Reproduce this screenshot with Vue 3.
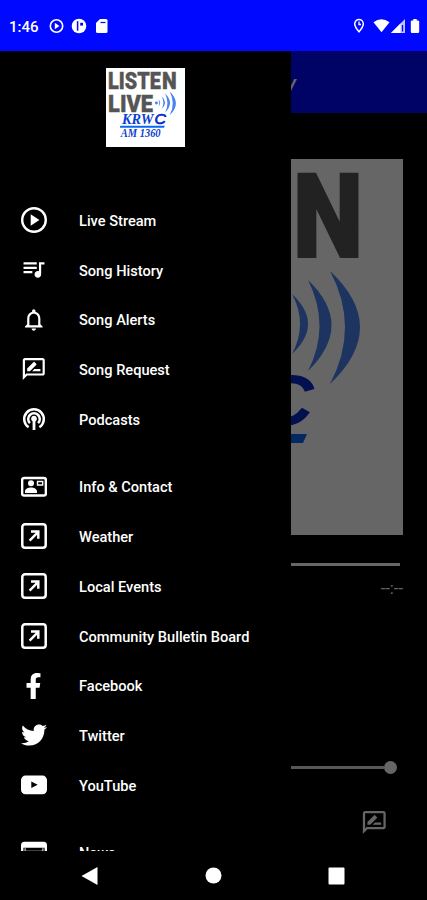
<script setup>
const icons = {
  play: {
    viewBox: '0 0 26 26',
    paths: ['M13 0a13 13 0 1 0 0 26 13 13 0 0 0 0-26zm0 2.4a10.6 10.6 0 1 1 0 21.2 10.6 10.6 0 0 1 0-21.2zM9.7 7.3v11.4l8.7-5.7z'],
  },
  queue: {
    viewBox: '.7 1.2 23.6 23.6',
    paths: ['M15 6H3v2h12V6zm0 4H3v2h12v-2zM3 16h8v-2H3v2zM17 6v8.18c-.31-.11-.65-.18-1-.18-1.66 0-3 1.34-3 3s1.34 3 3 3 3-1.34 3-3V8h3V6h-5z'],
  },
  bell: {
    viewBox: '.4 .4 23.6 23.6',
    paths: ['M12 22c1.1 0 2-.9 2-2h-4c0 1.1.9 2 2 2zm6-6v-5c0-3.07-1.63-5.64-4.5-6.32V4c0-.83-.67-1.5-1.5-1.5s-1.5.67-1.5 1.5v.68C7.64 5.36 6 7.92 6 11v5l-2 2v1h16v-1l-2-2zm-2 1H8v-6c0-2.48 1.51-4.5 4-4.5s4 2.02 4 4.5v6z'],
  },
  review: {
    viewBox: '.4 .2 23.6 23.6',
    paths: ['M20 2H4c-1.1 0-1.99.9-1.99 2L2 22l4-4h14c1.1 0 2-.9 2-2V4c0-1.1-.9-2-2-2zm0 14H5.17L4 17.17V4h16v12zM10.5 14H18v-2h-5.5zm3.86-5.87c.2-.2.2-.51 0-.71l-1.77-1.77c-.2-.2-.51-.2-.71 0L6 11.53V14h2.47l5.89-5.87z'],
  },
  podcast: {
    viewBox: '0 0 26 26',
    paths: ['M13 9.8a3 3 0 0 0-1.4 5.6V24h2.8v-8.6a3 3 0 0 0-1.4-5.6z'],
    strokes: ['M7.6 21.3a9.8 9.8 0 1 1 10.8 0', 'M8.9 17.2a5.8 5.8 0 1 1 8.2 0'],
  },
  contact: {
    viewBox: '0 0 26 26',
    paths: [
      'M10 6.2a3 3 0 1 0 0 6 3 3 0 0 0 0-6zM4 19v-1.5c0-2.6 3.2-4 6-4s6 1.4 6 4V19z',
      'M15.8 6.7h6.6v5h-6.6zm1.4 1.5v2h3.8v-2z',
    ],
    strokes: ['M3 4h20a1.9 1.9 0 0 1 1.9 1.9v13.6a1.9 1.9 0 0 1-1.9 1.9H3a1.9 1.9 0 0 1-1.9-1.9V5.9A1.9 1.9 0 0 1 3 4z'],
  },
  link: {
    viewBox: '0 0 26 26',
    paths: [],
    strokes: [
      'M4 1.3h18A2.7 2.7 0 0 1 24.7 4v18a2.7 2.7 0 0 1-2.7 2.7H4A2.7 2.7 0 0 1 1.3 22V4A2.7 2.7 0 0 1 4 1.3z',
      'M8.6 17.6l8.4-8.4M10 8.4h7.3v7.3',
    ],
  },
  facebook: {
    viewBox: '-86 0 512 512',
    paths: ['M279.14 288l14.22-92.66h-88.91v-60.13c0-25.35 12.42-50.06 52.24-50.06h40.42V6.26S260.43 0 225.36 0c-73.22 0-121.08 44.38-121.08 124.72v70.62H22.89V288h81.39v224h100.17V288z'],
  },
  twitter: {
    viewBox: '0 0 512 512',
    paths: ['M459.37 151.716c.325 4.548.325 9.097.325 13.645 0 138.72-105.583 298.558-298.558 298.558-59.452 0-114.68-17.219-161.137-47.106 8.447.974 16.568 1.299 25.34 1.299 49.055 0 94.213-16.568 130.274-44.832-46.132-.975-84.792-31.188-98.112-72.772 6.498.974 12.995 1.624 19.818 1.624 9.421 0 18.843-1.3 27.614-3.573-48.081-9.747-84.143-51.98-84.143-102.985v-1.299c13.969 7.797 30.214 12.67 47.431 13.319-28.264-18.843-46.781-51.005-46.781-87.391 0-19.492 5.197-37.36 14.294-52.954 51.655 63.675 129.3 105.258 216.365 109.807-1.624-7.797-2.599-15.918-2.599-24.04 0-57.828 46.782-104.934 104.934-104.934 30.213 0 57.502 12.67 76.67 33.137 23.715-4.548 46.456-13.32 66.599-25.34-7.798 24.366-24.366 44.833-46.132 57.827 21.117-2.273 41.584-8.122 60.426-16.243-14.292 20.791-32.161 39.308-52.628 54.253z'],
  },
  youtube: {
    viewBox: '0 0 26 26',
    paths: ['M4.5 3.6h17A4.5 4.5 0 0 1 26 8.1v9.6a4.5 4.5 0 0 1-4.5 4.5h-17A4.5 4.5 0 0 1 0 17.7V8.1a4.5 4.5 0 0 1 4.5-4.5zM10.3 9.5v6.5l6.4-3.2z'],
  },
  news: {
    viewBox: '0 0 26 26',
    paths: ['M3.5 1.7h19A3.5 3.5 0 0 1 26 5.2V22a2 2 0 0 1-2 2H2a2 2 0 0 1-2-2V5.2a3.5 3.5 0 0 1 3.5-3.5zM2.4 7.7V21h1.2V8.3h1v2.4h16.8V8.3h1V21h1.2V7.7z'],
  },
};

const menuGroups = [
  [
    { icon: 'play', label: 'Live Stream' },
    { icon: 'queue', label: 'Song History' },
    { icon: 'bell', label: 'Song Alerts' },
    { icon: 'review', label: 'Song Request' },
    { icon: 'podcast', label: 'Podcasts' },
  ],
  [
    { icon: 'contact', label: 'Info & Contact' },
    { icon: 'link', label: 'Weather' },
    { icon: 'link', label: 'Local Events' },
    { icon: 'link', label: 'Community Bulletin Board' },
    { icon: 'facebook', label: 'Facebook' },
    { icon: 'twitter', label: 'Twitter' },
    { icon: 'youtube', label: 'YouTube' },
  ],
  [
    { icon: 'news', label: 'News' },
  ],
];
</script>

<template>
  <div class="phone">
    <svg class="defs" width="0" height="0">
      <symbol id="station-logo" viewBox="0 0 376 376">
        <rect width="376" height="376" fill="#fff" />
        <g class="logo-heading">
          <text x="10" y="98" textLength="251" lengthAdjust="spacingAndGlyphs">LISTE</text>
          <text x="266" y="98" textLength="70" lengthAdjust="spacingAndGlyphs">N</text>
          <text x="10" y="209" textLength="214" lengthAdjust="spacingAndGlyphs">LIVE</text>
        </g>
        <g fill="#4a82f0">
          <circle cx="240" cy="167" r="7" />
          <path d="M249 149q18 17 0 36q9-18 0-36z" />
          <path d="M265 135q32 30 0 60q16-30 0-60z" />
          <path d="M281 121q47 45 0 91q23-45 0-91z" />
          <path d="M303 112q60 56 0 113q30-57 0-113z" />
        </g>
        <g class="logo-station">
          <text x="76" y="266" font-size="74" textLength="150" lengthAdjust="spacingAndGlyphs">KRW</text>
          <text class="logo-c" x="231" y="265" font-size="68" textLength="54" lengthAdjust="spacingAndGlyphs">C</text>
          <text x="70" y="329" font-size="57" textLength="190" lengthAdjust="spacingAndGlyphs">AM 1360</text>
        </g>
        <path d="M68 275h212l-4 9H66z" fill="#0a68f0" />
      </symbol>
    </svg>

    <header class="status-bar">
      <span class="clock">1:46</span>
      <svg class="status-left" width="60" height="16" viewBox="0 0 60 16">
        <circle cx="7.5" cy="8" r="6.2" fill="none" stroke="#fff" stroke-width="1.6" />
        <path d="M5.8 4.8v6.4l4.6-3.2z" fill="#fff" />
        <circle cx="30" cy="8" r="7.3" fill="#fff" />
        <path d="M28.6 3.2v9.5" stroke="#0008ff" stroke-width="1.5" />
        <path d="M31.2 4.8h2.8v2.8h-2.8z" fill="#0008ff" />
        <path d="M51 1h6a1.500 1.500 0 0 1 1.500 1.500v11a1.500 1.500 0 0 1-1.500 1.500h-8.500a1.500 1.500 0 0 1-1.500-1.500V5z" fill="#fff" />
        <path d="M51.5 4.5h5" stroke="#0008ff" stroke-width="1.2" />
      </svg>
      <svg class="status-right" width="68" height="16" viewBox="0 0 68 16">
        <path d="M6 1.5a4.3 4.3 0 0 0-4.3 4.3c0 3.2 4.3 8 4.3 8s4.3-4.8 4.3-8A4.3 4.3 0 0 0 6 1.5z" fill="none" stroke="#fff" stroke-width="1.5" />
        <path d="M6 3.5v3h2" fill="none" stroke="#fff" stroke-width="1.3" />
        <path d="M20.5 4.2q7.8-6 16 0l-8 10z" fill="#fff" />
        <path d="M52 1v14H38z" fill="#fff" opacity=".75" />
        <path d="M47.5 5.5V15H38z" fill="#fff" />
        <path d="M49.5 7v6.5" stroke="#0008ff" stroke-width="1.3" />
        <path d="M60.3 1h3.4v1.4h1.3a1.2 1.2 0 0 1 1.2 1.2v10.2a1.2 1.2 0 0 1-1.2 1.2h-6a1.2 1.2 0 0 1-1.2-1.2V3.6A1.2 1.2 0 0 1 59 2.4h1.3z" fill="#fff" />
      </svg>
    </header>

    <div class="stage">
      <main class="player">
        <div class="title-bar">y</div>
        <svg class="cover"><use href="#station-logo" /></svg>
        <div class="progress"></div>
        <div class="duration">--:--</div>
        <div class="volume">
          <span class="volume-track"></span>
          <span class="volume-thumb"></span>
        </div>
        <svg class="review" :viewBox="icons.review.viewBox">
          <path :d="icons.review.paths[0]" />
        </svg>
      </main>

      <div class="scrim"></div>

      <aside class="drawer">
        <svg class="drawer-logo"><use href="#station-logo" /></svg>
        <nav class="menu">
          <ul v-for="(group, index) in menuGroups" :key="index">
            <li v-for="item in group" :key="item.label">
              <svg class="menu-icon" :viewBox="icons[item.icon].viewBox">
                <path v-for="d in icons[item.icon].paths" :key="d" :d="d" fill-rule="evenodd" />
                <path v-for="d in icons[item.icon].strokes" :key="d" :d="d" class="stroked" />
              </svg>
              <span class="menu-label">{{ item.label }}</span>
            </li>
          </ul>
        </nav>
      </aside>
    </div>

    <footer class="nav-bar">
      <svg width="17" height="20" viewBox="0 0 17 20"><path d="M16.5 1v18L.5 10z" /></svg>
      <svg width="17" height="17" viewBox="0 0 17 17"><circle cx="8.5" cy="8.5" r="8" /></svg>
      <svg width="17" height="18" viewBox="0 0 17 18"><rect x=".5" y=".5" width="16" height="17" rx="1" /></svg>
    </footer>
  </div>
</template>

<style>
body {
  background: #000;
}
</style>

<style scoped>
.phone {
  width: 427px;
  height: 900px;
  display: flex;
  flex-direction: column;
  overflow: hidden;
  background: #000;
  color: #fff;
  font-family: Roboto, sans-serif;
}

.defs {
  position: absolute;
}

.logo-heading {
  font-family: Roboto, sans-serif;
  font-size: 116px;
  font-weight: 900;
  fill: #555;
  stroke: #555;
  stroke-width: 2;
}

.logo-station {
  font-family: "Liberation Serif", serif;
  font-weight: bold;
  font-style: italic;
  fill: #0c3fd0;
}

.logo-c {
  font-family: "Liberation Sans", sans-serif;
  font-weight: normal;
  stroke: #0628c8;
  stroke-width: 3;
  fill: #0628c8;
}

.status-bar {
  height: 51px;
  flex: none;
  display: flex;
  align-items: center;
  padding: 1px 6px 0 9px;
  box-sizing: border-box;
  background: #0008ff;
}

.clock {
  width: 40px;
  padding-top: 1px;
  font-size: 15px;
  font-weight: 500;
}

.status-right {
  margin-left: auto;
}

.stage {
  position: relative;
  height: 800px;
  flex: none;
  overflow: hidden;
}

.player {
  height: 100%;
  display: flex;
  flex-direction: column;
}

.title-bar {
  height: 62px;
  line-height: 64px;
  padding-right: 131px;
  text-align: right;
  font-size: 20px;
  font-weight: 500;
  font-style: italic;
  background: #0008ff;
}

.cover {
  width: 376px;
  height: 376px;
  margin: 46px 0 0 27px;
}

.progress {
  width: 372.5px;
  height: 3px;
  margin: 28px 0 0 27px;
  background: #fff;
}

.duration {
  margin: 15px 24px 0 0;
  height: 16px;
  line-height: 16px;
  text-align: right;
  font-size: 16.5px;
}

.volume {
  display: flex;
  align-items: center;
  height: 14px;
  margin: 163px 30.5px 0 27px;
}

.volume-track {
  flex: 1;
  height: 3px;
  background: #ddd;
}

.volume-thumb {
  width: 13px;
  height: 13px;
  border-radius: 50%;
  background: #fff;
}

.review {
  width: 27px;
  height: 27px;
  margin: 35px 39px 0 auto;
  fill: #fff;
}

.scrim {
  position: absolute;
  inset: 0;
  background: rgba(0, 0, 0, 0.6);
}

.drawer {
  position: absolute;
  top: 0;
  bottom: 0;
  left: 0;
  width: 291px;
  overflow: hidden;
  background: #000;
}

.drawer-logo {
  display: block;
  width: 79px;
  height: 79px;
  margin: 17px auto 48.5px;
}

.menu {
  display: flex;
  flex-direction: column;
  gap: 18px;
}

.menu ul {
  margin: 0;
  padding: 0;
  list-style: none;
}

.menu li {
  display: flex;
  align-items: center;
  gap: 32.5px;
  height: 49.7px;
  padding-left: 20.5px;
  font-size: 14.6px;
  font-weight: 500;
  white-space: nowrap;
}

.menu-label {
  padding-top: 1.4px;
}

.menu ul:last-child .menu-label {
  padding-top: 0;
}

.menu-icon {
  width: 26px;
  height: 26px;
  flex: none;
  fill: #fff;
}

.menu-icon .stroked {
  fill: none;
  stroke: #fff;
  stroke-width: 2.5;
}

.nav-bar {
  flex: 1;
  display: flex;
  align-items: center;
  justify-content: space-between;
  padding: 0 82px 0 81px;
  background: #000;
}

.nav-bar svg {
  fill: #fff;
}
</style>
